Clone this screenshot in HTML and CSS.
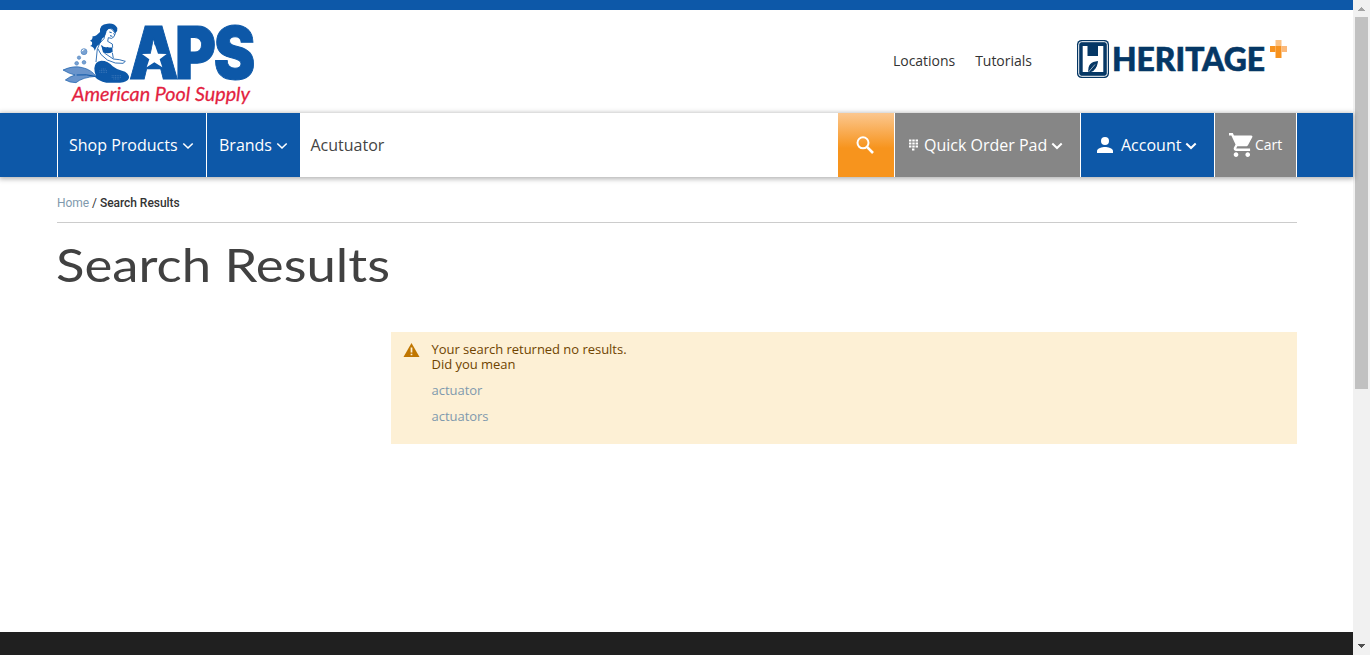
FILE: index.html
```html
<!DOCTYPE html>
<html lang="en">
<head>
<meta charset="utf-8">
<title>Search Results</title>
<link rel="stylesheet" href="styles.css">
</head>
<body>
<div class="window">
<div class="page">
  <header class="header">
    <a class="logo" aria-label="American Pool Supply">
      <svg width="200" height="94" viewBox="0 0 600 282">
        <g fill="#0d58a8">
          <path d="M120 42 Q118 18 142 17 Q163 14 172 30 Q174 39 166 46 L158 34 Q148 28 140 38 Q138 53 126 62 Q123 76 111 84 L104 98 Q102 86 90 84 Q98 82 96 72 L90 68 Q98 66 98 54 Q105 58 120 42Z"/>
          <path d="M103 151 Q104 130 124 128 Q145 128 158 145 Q170 155 186 158 Q207 163 207 180 Q202 193 180 194 L139 194 Q115 190 103 175 L66 174 Q88 170 108 175 Q103 163 103 151Z"/>
          <path d="M124 82 Q133 90 143 87 Q149 90 157 88 L158 101 Q145 110 129 103Z"/>
        </g>
        <path d="M139 39 Q143 28 155 33 L166 46 L162 56 Q156 65 145 59 L143 70 L157 78 L158 89 M135 48 L132 62 Q116 75 113 91 Q119 111 142 126 L166 135 L189 136 L196 130 L178 125 L160 123 L133 105 L125 82 M112 92 L108 132 M157 104 L160 121" fill="none" stroke="#0d58a8" stroke-width="2.5"/>
        <path d="M148 42 l7 2 m5 3 l4 2 M150 53 l7 2" stroke="#0d58a8" stroke-width="3"/>
        <path d="M9 156 Q42 141 68 149 Q94 155 108 175 Q67 178 48 194 Q29 194 16 186 Q28 176 45 171 Q29 168 9 156Z" fill="#6994cb" stroke="#0d58a8" stroke-width="2"/>
        <path d="M50 171 Q80 168 106 175" fill="none" stroke="#0d58a8" stroke-width="3"/>
        <path d="M118 158 h24 M118 163 h24 M124 153 h14 M155 173 h28 M155 178 h28 M160 183 h18" fill="none" stroke="#4d82c0" stroke-width="2" stroke-dasharray="3 2"/>
        <g fill="#79a2d2" stroke="#4d82c0" stroke-width="2">
          <circle cx="72" cy="101" r="9"/><circle cx="57" cy="119" r="5"/><circle cx="72" cy="133" r="5.5"/><circle cx="50" cy="136" r="5.5"/>
        </g>
        <path d="M66 100 q2 -6 7 -5" stroke="#fff" stroke-width="3" fill="none"/>
        <text class="aps" x="241 401 536" y="184" transform="scale(.86 1)">APS</text>
        <path d="M262 122h41v30h-41z" fill="#0d58a8"/>
        <path d="M284 79 L294 107 L320 108 L299 124 L307 148 L283 133 L260 148 L268 124 L246 108 L274 107Z" fill="#fff"/>
        <text class="tagline" x="36" y="249" textLength="534" lengthAdjust="spacingAndGlyphs">American Pool Supply</text>
      </svg>
    </a>
    <nav class="links"><a>Locations</a><a>Tutorials</a></nav>
    <a class="heritage" aria-label="Heritage Plus">
      <svg width="213" height="42" viewBox="0 0 213 42">
        <rect x="1" y="2" width="32" height="38" rx="4.5" fill="#053765"/>
        <rect x="2.700" y="3.700" width="28.600" height="34.600" rx="3" fill="none" stroke="#fff" stroke-width="1"/>
        <path d="M6.700 8h4.800v10h10.500V8h5.300v26H15Q21 32 21.500 23.500Q14 26 12 34H6.700z" fill="#fff"/>
        <path d="M12.500 34Q11 24 22 23Q21 32 15 32.500Z" fill="#053765"/>
        <path d="M12.500 34L19 26.500" stroke="#fff" stroke-width=".6"/>
        <text class="heritage-name" x="36" y="32.500" textLength="153" lengthAdjust="spacingAndGlyphs">HERITAGE</text>
        <path d="M199.500 8h6v12h-6z" fill="#f7921e"/><path d="M205.500 8h5.500v6h-5.500z" fill="#fbb97a"/>
        <path d="M199.500 2h6v6h-6z" fill="#fbc182"/><path d="M194 8h5.500v6H194z" fill="#f7921e"/>
      </svg>
    </a>
  </header>
  <div class="navbar">
    <div class="item shop">Shop Products
      <svg class="chev" width="12" height="8" viewBox="0 0 12 8"><path d="M1.300 1.500L6 6L10.700 1.500"/></svg></div>
    <div class="item brands">Brands
      <svg class="chev" width="12" height="8" viewBox="0 0 12 8"><path d="M1.300 1.500L6 6L10.700 1.500"/></svg></div>
    <div class="search">Acutuator</div>
    <div class="go"><svg width="20" height="20" viewBox="0 0 20 20"><circle cx="8" cy="6.800" r="5.500" fill="none" stroke="#fff" stroke-width="2"/><path d="M12 10.800L18 17" stroke="#fff" stroke-width="2.600"/></svg></div>
    <div class="item pad">
      <svg width="9" height="12" viewBox="0 0 9 12"><path d="M0 1.500h9M0 4.500h9M0 7.500h9M3 10.500h3" stroke="#fff" stroke-width="2" stroke-dasharray="2.400 .9"/></svg>
      <span>Quick Order Pad</span>
      <svg class="chev bold" width="12" height="8" viewBox="0 0 12 8"><path d="M1.300 1.500L6 6L10.700 1.500"/></svg></div>
    <div class="item account">
      <svg width="16" height="16" viewBox="0 0 16 16" fill="#fff"><circle cx="8" cy="4" r="4"/><path d="M0 16v-2c0-2.700 5.300-4 8-4s8 1.300 8 4v2z"/></svg>
      <span>Account</span>
      <svg class="chev bold" width="12" height="8" viewBox="0 0 12 8"><path d="M1.300 1.500L6 6L10.700 1.500"/></svg></div>
    <div class="item cart">
      <svg width="24" height="24" viewBox="1 2 20.500 20" preserveAspectRatio="none" fill="#fff"><path d="M7 18c-1.100 0-1.990.9-1.990 2S5.900 22 7 22s2-.9 2-2-.9-2-2-2zM1 2v2h2l3.600 7.590-1.350 2.450c-.16.280-.25.610-.25.960 0 1.100.9 2 2 2h12v-2H7.420c-.14 0-.25-.11-.25-.25l.03-.12.900-1.630h7.450c.75 0 1.410-.41 1.750-1.030l3.580-6.490A1 1 0 0 0 20 4H5.210l-.94-2H1zm16 16c-1.100 0-1.990.9-1.990 2s.89 2 1.990 2 2-.9 2-2-.9-2-2-2z"/></svg>
      <span>Cart</span></div>
  </div>
  <main class="main">
    <div class="crumbs"><a>Home</a> / <b>Search Results</b></div>
    <h1 class="title"><svg width="340" height="60"><text x="-1" y="43" textLength="334" lengthAdjust="spacingAndGlyphs">Search Results</text></svg></h1>
    <section class="notice">
      <svg width="17" height="14" viewBox="0 0 16 14"><path d="M8 0L16 14H0z" fill="#c07600"/><path d="M8 4.500v5M8 10.700v1.600" stroke="#fdf0d5" stroke-width="1.700"/></svg>
      <div class="notice-text">
        <p>Your search returned no results.<br>Did you mean</p>
        <a>actuator</a>
        <a>actuators</a>
      </div>
    </section>
  </main>
  <footer class="footer"></footer>
</div>
<div class="scrollbar">
  <svg class="arrow" width="17" height="17"><path d="M8 7h1v1h1v1h1v1h1v1H5v-1h1V9h1V8h1z" fill="#a3a3a3"/></svg>
  <div class="thumb"></div>
  <svg class="arrow down" width="17" height="17"><path d="M5 6h7v1h-1v1h-1v1H9v1H8V9H7V8H6V7H5z" fill="#505050"/></svg>
</div>
</div>
</body>
</html>
```
FILE: styles.css
```css
* { box-sizing: border-box; }
body { margin: 0; font-family: "Open Sans", sans-serif; color: #333; background: #fff; }
svg { display: block; flex: none; overflow: visible; }
.window { display: flex; height: 655px; overflow: hidden; }
.page { width: 1353px; display: flex; flex-direction: column; }
.header { height: 113px; border-top: 10px solid #0d58a8; display: flex; align-items: flex-start; padding: 8px 64px 0 60px; }
.logo { width: 200px; }
.aps { font: 900 218px Inter, Lato, sans-serif; font-kerning: none; fill: #0d58a8; stroke: #0d58a8; stroke-width: 3; }
.tagline { font: italic 400 59px Lato, sans-serif; fill: #e31f41; stroke: #e31f41; stroke-width: .8; }
.links { display: flex; gap: 20px; margin-left: 633px; padding-top: 33px; font-size: 14px; line-height: 20px; letter-spacing: -.03px; }
.heritage { margin: 20px 0 0 auto; }
.heritage-name { font: 900 31.500px Lato, sans-serif; fill: #053765; stroke: #053765; stroke-width: .6; }
.navbar { height: 64px; flex: none; display: flex; background: #0d58a8; padding-left: 57px; color: #fff; font-size: 16px; box-shadow: 0 1px 5px 1px rgba(0,0,0,.3); position: relative; }
.item { display: flex; align-items: center; border-left: 1px solid #fff; }
.chev { fill: none; stroke: #fff; stroke-width: 1.600; margin: 2px 0 0 4px; }
.bold { stroke-width: 2; }
.shop { width: 149px; padding-left: 11px; }
.brands { width: 94px; padding-left: 12px; }
.search { width: 538px; background: #fff; color: #444; padding-left: 10.5px; line-height: 64px; }
.go { width: 56px; background: linear-gradient(#fbc78f, #f7941d 55%); padding: 23px 0 0 17px; }
.pad { width: 186px; background: #868686; padding-left: 14px; }
.pad span { margin-left: 6px; }
.account { width: 134px; padding-left: 16px; }
.account span { margin-left: 8px; }
.cart { width: 83px; background: #868686; padding-left: 14px; font-size: 14px; border-right: 1px solid #fff; }
.cart span { margin: -1px 0 0 2px; }
.main { flex: 1; padding: 17px 56px 0 57px; }
.crumbs { font: 12px/18px Roboto, sans-serif; letter-spacing: -.04px; height: 29px; border-bottom: 1px solid #ccc; }
.crumbs a, .notice a { color: #8099ad; }
.crumbs b { font-weight: 500; }
.title { margin: 16px 0 0; height: 93px; font: 400 47px Lato, sans-serif; fill: #414141; }
.notice { margin-left: 334px; height: 112px; background: #fdf0d5; padding: 10px 12px; display: flex; color: #6f4400; font-size: 13px; line-height: 15px; letter-spacing: -.03px; }
.notice > svg { margin-top: 1px; }
.notice-text { margin-left: 11.5px; }
.notice p { margin: 0 0 11px; }
.notice a { display: block; margin-bottom: 11px; }
.footer { height: 23px; background: #202020; }
.scrollbar { width: 17px; background: #f1f1f1; display: flex; flex-direction: column; }
.thumb { height: 372px; margin: 0 2px; background: #c1c1c1; }
.down { margin-top: auto; }
```
